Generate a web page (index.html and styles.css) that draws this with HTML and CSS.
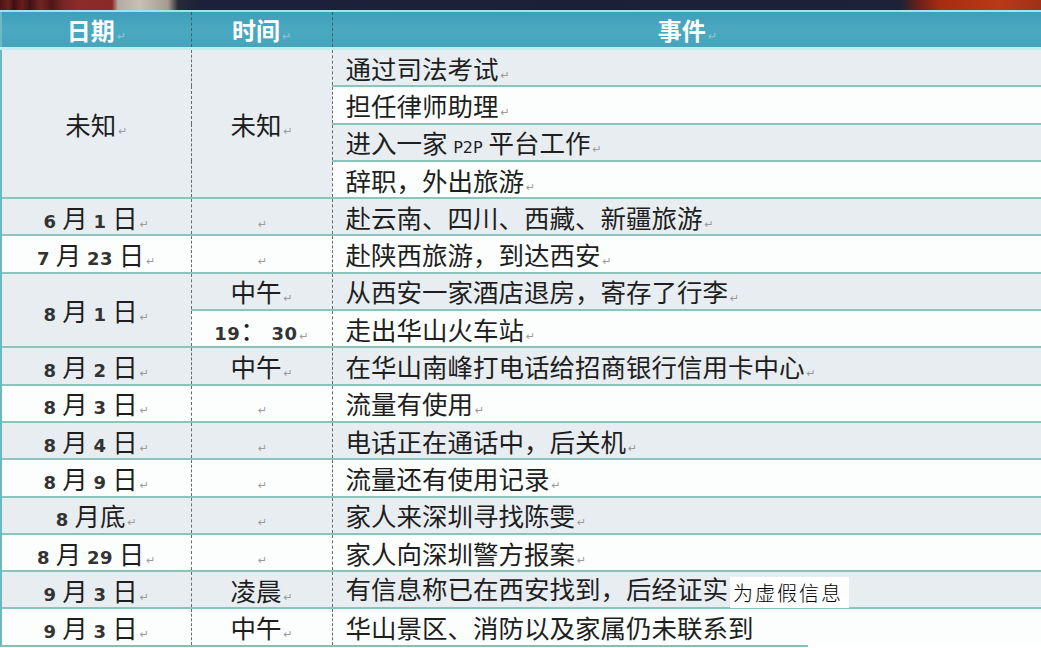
FILE: index.html
```html
<!DOCTYPE html>
<html lang="zh">
<head>
<meta charset="utf-8">
<title>时间线</title>
<link rel="stylesheet" href="styles.css">
</head>
<body>
<div class="photo"></div>
<table class="tl">
  <colgroup>
    <col class="c1"><col class="c2"><col class="c3">
  </colgroup>
  <thead>
    <tr>
      <th class="first">日期<span class="pm">↵</span></th>
      <th>时间<span class="pm">↵</span></th>
      <th>事件<span class="pm">↵</span></th>
    </tr>
  </thead>
  <tbody>
    <tr class="lt">
      <td rowspan="4" class="ctr first lt">未知<span class="pm">↵</span></td>
      <td rowspan="4" class="ctr lt">未知<span class="pm">↵</span></td>
      <td class="ev">通过司法考试<span class="pm">↵</span></td>
    </tr>
    <tr class="wt"><td class="ev">担任律师助理<span class="pm">↵</span></td></tr>
    <tr class="lt"><td class="ev">进入一家 <span class="lat">P2P</span> 平台工作<span class="pm">↵</span></td></tr>
    <tr class="wt"><td class="ev">辞职，外出旅游<span class="pm">↵</span></td></tr>

    <tr class="lt">
      <td class="ctr first"><span class="n">6</span> 月 <span class="n">1</span> 日<span class="pm">↵</span></td>
      <td class="ctr"><span class="pm">↵</span></td>
      <td class="ev">赴云南、四川、西藏、新疆旅游<span class="pm">↵</span></td>
    </tr>
    <tr class="wt">
      <td class="ctr first"><span class="n">7</span> 月 <span class="n">23</span> 日<span class="pm">↵</span></td>
      <td class="ctr"><span class="pm">↵</span></td>
      <td class="ev">赴陕西旅游，到达西安<span class="pm">↵</span></td>
    </tr>
    <tr class="lt">
      <td rowspan="2" class="ctr first lt"><span class="n">8</span> 月 <span class="n">1</span> 日<span class="pm">↵</span></td>
      <td class="ctr">中午<span class="pm">↵</span></td>
      <td class="ev">从西安一家酒店退房，寄存了行李<span class="pm">↵</span></td>
    </tr>
    <tr class="wt">
      <td class="ctr"><span class="n">19</span>： <span class="n">30</span><span class="pm">↵</span></td>
      <td class="ev">走出华山火车站<span class="pm">↵</span></td>
    </tr>
    <tr class="lt">
      <td class="ctr first"><span class="n">8</span> 月 <span class="n">2</span> 日<span class="pm">↵</span></td>
      <td class="ctr">中午<span class="pm">↵</span></td>
      <td class="ev">在华山南峰打电话给招商银行信用卡中心<span class="pm">↵</span></td>
    </tr>
    <tr class="wt">
      <td class="ctr first"><span class="n">8</span> 月 <span class="n">3</span> 日<span class="pm">↵</span></td>
      <td class="ctr"><span class="pm">↵</span></td>
      <td class="ev">流量有使用<span class="pm">↵</span></td>
    </tr>
    <tr class="lt">
      <td class="ctr first"><span class="n">8</span> 月 <span class="n">4</span> 日<span class="pm">↵</span></td>
      <td class="ctr"><span class="pm">↵</span></td>
      <td class="ev">电话正在通话中，后关机<span class="pm">↵</span></td>
    </tr>
    <tr class="wt">
      <td class="ctr first"><span class="n">8</span> 月 <span class="n">9</span> 日<span class="pm">↵</span></td>
      <td class="ctr"><span class="pm">↵</span></td>
      <td class="ev">流量还有使用记录<span class="pm">↵</span></td>
    </tr>
    <tr class="lt">
      <td class="ctr first"><span class="n">8</span> 月底<span class="pm">↵</span></td>
      <td class="ctr"><span class="pm">↵</span></td>
      <td class="ev">家人来深圳寻找陈雯<span class="pm">↵</span></td>
    </tr>
    <tr class="wt">
      <td class="ctr first"><span class="n">8</span> 月 <span class="n">29</span> 日<span class="pm">↵</span></td>
      <td class="ctr"><span class="pm">↵</span></td>
      <td class="ev">家人向深圳警方报案<span class="pm">↵</span></td>
    </tr>
    <tr class="lt">
      <td class="ctr first"><span class="n">9</span> 月 <span class="n">3</span> 日<span class="pm">↵</span></td>
      <td class="ctr">凌晨<span class="pm">↵</span></td>
      <td class="ev">有信息称已在西安找到，后经证实<span class="patch">为虚假信息</span></td>
    </tr>
    <tr class="wt">
      <td class="ctr first"><span class="n">9</span> 月 <span class="n">3</span> 日<span class="pm">↵</span></td>
      <td class="ctr">中午<span class="pm">↵</span></td>
      <td class="ev">华山景区、消防以及家属仍未联系到</td>
    </tr>
  </tbody>
</table>
<div class="tail"></div>
</body>
</html>
```
FILE: styles.css
```css
html, body {
  margin: 0;
  padding: 0;
  background: #ffffff;
}
body {
  width: 1041px;
  height: 648px;
  overflow: hidden;
  font-family: "Noto Sans CJK SC", "Liberation Sans", sans-serif;
  color: #1e1e1e;
}
.photo {
  height: 10px;
  background: linear-gradient(90deg,
    #4a1414 0px, #6e2020 8px, #3e1010 14px, #6a1d1d 22px, #401212 30px,
    #722424 40px, #501616 52px, #7a2626 64px, #8c2c2a 80px, #8a2a28 112px,
    #b4aca4 118px, #c8c0b6 140px, #a49a90 168px, #2a2a38 178px,
    #1b2138 200px, #1a2036 600px, #1c2238 900px, #6a2018 918px,
    #a82c10 940px, #b83a18 1000px, #a03018 1041px);
}
.tl {
  width: 1041px;
  border-collapse: collapse;
  table-layout: fixed;
}
.c1 { width: 190px; }
.c2 { width: 141px; }
.c3 { width: 710px; }

.tl th {
  height: 35px;
  padding: 0;
  background: linear-gradient(180deg, #3f9fb8 0%, #4aa9c1 50%, #46a3bb 100%);
  border-top: 2px solid #a6e1ea;
  border-bottom: 2px solid #5aa7b2;
  color: #ffffff;
  font-size: 24px;
  line-height: 24px;
  font-weight: 700;
  text-align: center;
  vertical-align: middle;
  border-left: 1px dashed #3f5f68;
}
.tl th.first { border-left: 2px solid #6ab9c4; }
.tl th .pm { color: #86c0cc; }

.tl td {
  height: 35.3px;
  padding: 0;
  border-top: 2px solid #8cc4bd;
  border-left: 1px dashed #6a6a6a;
  font-size: 25.5px;
  line-height: 26px;
  vertical-align: middle;
  white-space: nowrap;
}
.tl tbody tr:first-child td { border-top: 3px solid #c2ecef; }
.tl td.first { border-left: 2px solid #6fb7c0; }

.lt td, td.lt { background: #e8edf1; }
.wt td { background: #fcfefe; }

.ctr { text-align: center; }
.ev { padding-left: 13px !important; text-align: left; }

.n {
  font-family: "DejaVu Sans", "Liberation Sans", sans-serif;
  font-weight: 700;
  font-size: 18px;
  line-height: 0;
  color: #333333;
  letter-spacing: 0.5px;
}
.lat {
  font-family: "DejaVu Sans", "Liberation Sans", sans-serif;
  font-size: 16px;
  line-height: 0;
  font-weight: 400;
}
.pm {
  font-family: "DejaVu Sans", sans-serif;
  font-size: 11px;
  line-height: 0;
  color: #9a9a9a;
  margin-left: 2px;
}
.patch {
  display: inline-block;
  background: #ffffff;
  height: 31px;
  line-height: 31px;
  padding: 0 6px 0 3px;
  margin: -3px 0 -3px 2px;
  font-size: 20px;
  font-weight: 300;
  letter-spacing: 2px;
  color: #000000;
  vertical-align: middle;
}
.tail {
  height: 2px;
  width: 808px;
  background: #86bdb6;
}
```
